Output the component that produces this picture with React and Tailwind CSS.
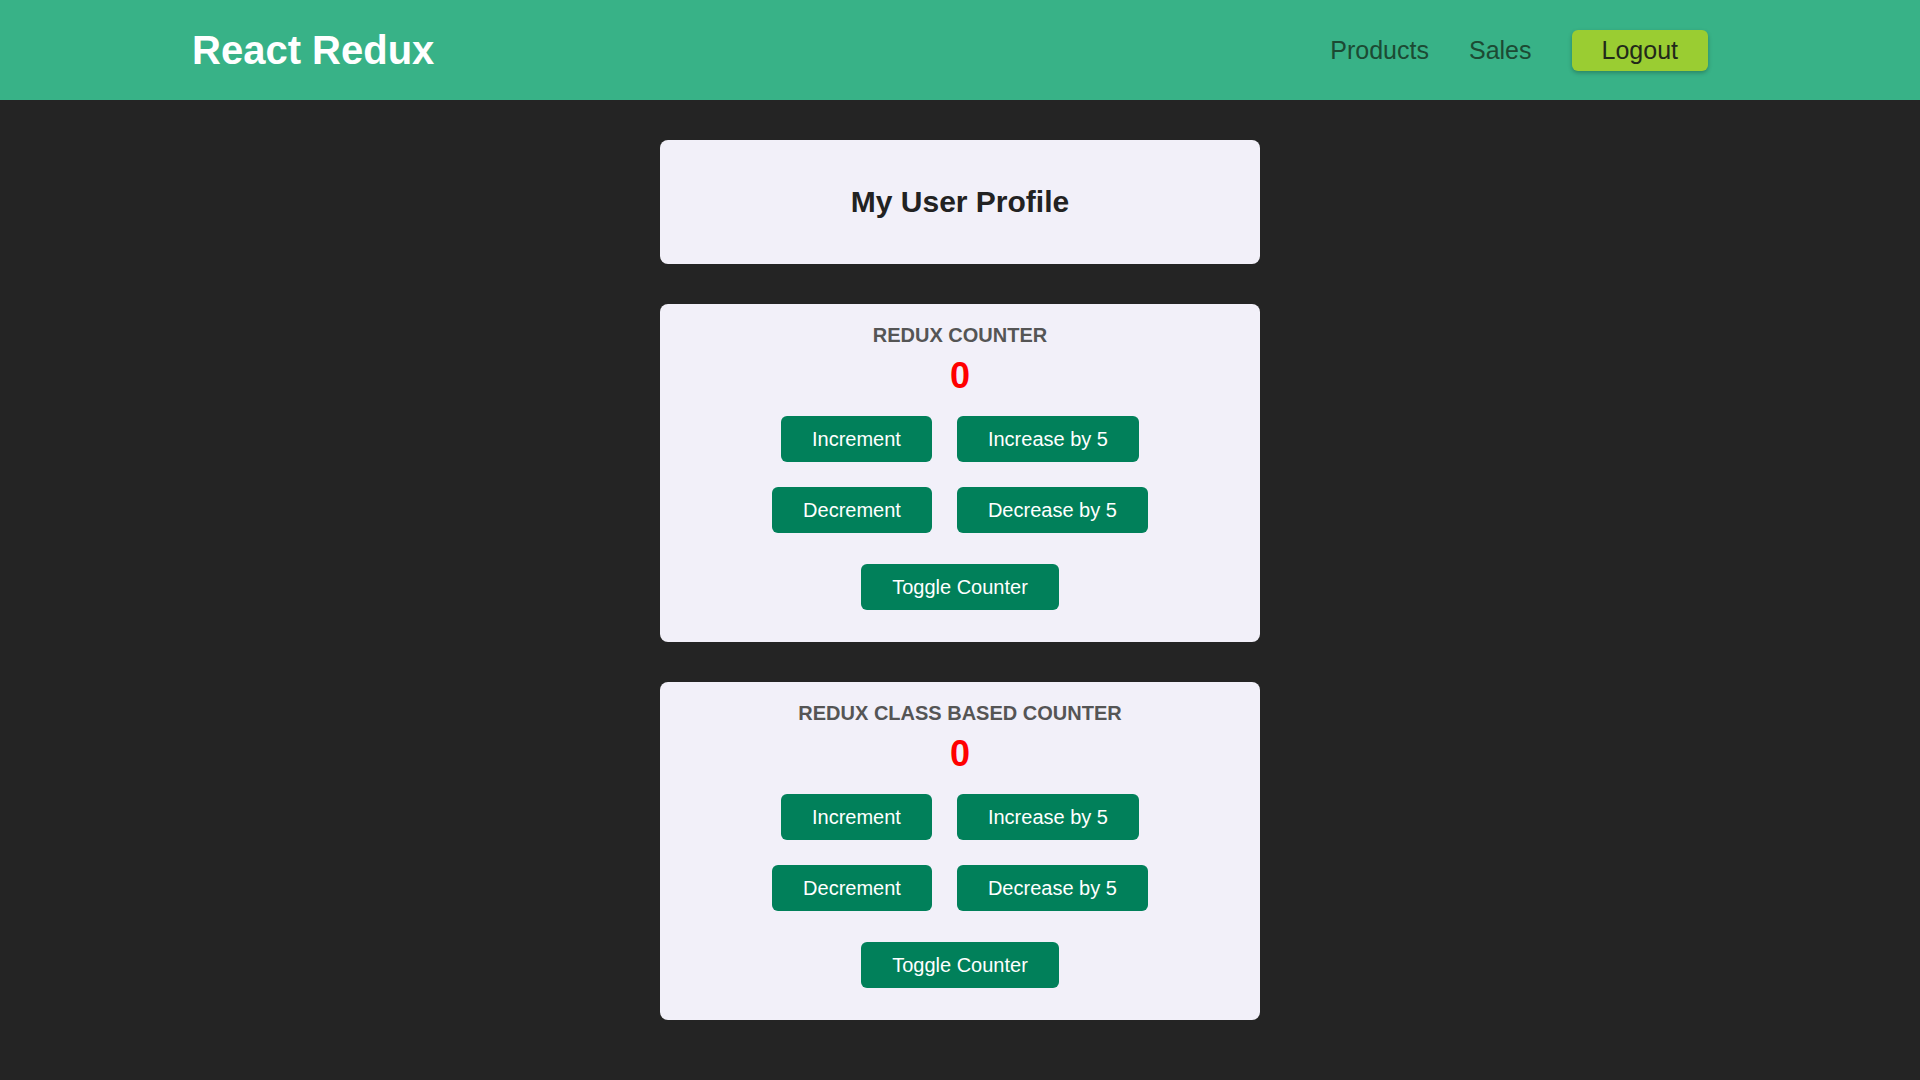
import React from "react";

function Btn({ children }) {
  return (
    <button className="h-[46px] px-[31px] rounded-[6px] bg-[#01805a] text-white text-[20px] leading-[23px] font-normal cursor-pointer">
      {children}
    </button>
  );
}

function Counter({ title }) {
  return (
    <section className="w-[600px] rounded-[8px] bg-[#f2f0f9] pt-[20px] pb-[32px] flex flex-col items-center">
      <h2 className="text-[20px] leading-[23px] font-bold text-[#555555] uppercase">{title}</h2>
      <div className="mt-[8px] text-[36px] leading-[41px] font-bold text-[#ff0000]">0</div>
      <div className="mt-[20px] flex justify-center gap-[25px]">
        <Btn>Increment</Btn>
        <Btn>Increase by 5</Btn>
      </div>
      <div className="mt-[25px] flex justify-center gap-[25px]">
        <Btn>Decrement</Btn>
        <Btn>Decrease by 5</Btn>
      </div>
      <div className="mt-[31px] flex justify-center">
        <Btn>Toggle Counter</Btn>
      </div>
    </section>
  );
}

export default function App() {
  return (
    <div className="min-h-screen bg-[#242424] font-['Liberation_Sans',Arial,sans-serif]">
      <header className="h-[100px] bg-[#38b287] flex items-center justify-between pl-[192px] pr-[212px]">
        <h1 className="text-[40px] leading-[46px] font-bold text-white">React Redux</h1>
        <nav>
          <ul className="flex items-center gap-[40px] text-[25px] leading-[29px]">
            <li><a href="#" className="text-[#1c4a33]">Products</a></li>
            <li><a href="#" className="text-[#1c4a33]">Sales</a></li>
            <li>
              <button className="h-[41px] px-[30px] rounded-[6px] bg-[#9acd32] text-[#22291a] text-[25px] leading-[29px] shadow-[0_2px_4px_rgba(0,0,0,0.25)]">
                Logout
              </button>
            </li>
          </ul>
        </nav>
      </header>
      <main className="flex flex-col items-center pt-[40px] gap-[40px] pb-[60px]">
        <section className="w-[600px] rounded-[8px] bg-[#f2f0f9] pt-[44px] pb-[45px] flex justify-center">
          <h2 className="text-[30px] leading-[35px] font-bold text-[#222222]">My User Profile</h2>
        </section>
        <Counter title="Redux Counter" />
        <Counter title="Redux Class Based Counter" />
      </main>
    </div>
  );
}
